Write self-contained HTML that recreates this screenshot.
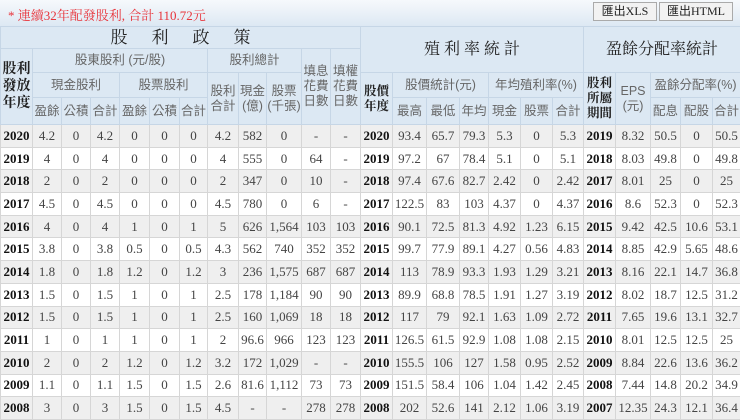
<!DOCTYPE html>
<html><head><meta charset="utf-8"><style>
html,body{margin:0;padding:0;width:740px;height:416px;overflow:hidden;background:#fff}
.top{position:absolute;left:0;top:0;width:740px;height:26px;background:linear-gradient(#f6f9fc,#dde8f3)}
.msg{position:absolute;left:8px;top:5px;font:13px "Liberation Serif","Noto Serif CJK SC","Noto Sans CJK TC",serif;color:#e8333a}
.btn{position:absolute;top:2px;height:17px;border:1px solid #aaa;background:#f2f2f2;font:12px "Liberation Serif","Noto Sans CJK TC",serif;color:#222;line-height:17px;text-align:center}
table{position:absolute;left:0;top:26px;border-collapse:collapse;table-layout:fixed;width:740px}
td{padding:0;text-align:center;border:1px solid #d6d6d6;font:13px "Liberation Serif",serif;color:#444;white-space:nowrap;overflow:hidden}
thead td{background:#dce8f3;border-color:#c6d6e6;font:12.5px "Liberation Sans","Noto Sans CJK TC",sans-serif;color:#666;line-height:15px}
thead td.b{color:#222;font-weight:bold;font-family:"Liberation Serif","Noto Serif CJK SC",serif}
thead td.t{font-size:17px;color:#222;font-family:"Liberation Serif","Noto Serif CJK SC",serif}
tbody tr{height:22.7px}
tbody tr:nth-child(odd) td{background:#efefef}
td.y{font-weight:bold;color:#111}
</style></head><body>
<div class="top"><div class="msg">* 連續32年配發股利, 合計 110.72元</div>
<div class="btn" style="left:593px;width:62px">匯出XLS</div>
<div class="btn" style="left:659px;width:72px">匯出HTML</div></div>
<table>
<colgroup>
<col style="width:32px"><col style="width:29px"><col style="width:29px"><col style="width:29px"><col style="width:30px"><col style="width:30px"><col style="width:28px"><col style="width:31px"><col style="width:28px"><col style="width:35px"><col style="width:29px"><col style="width:30px">
<col style="width:32px"><col style="width:34px"><col style="width:33px"><col style="width:29px"><col style="width:32px"><col style="width:32px"><col style="width:31px"><col style="width:32px"><col style="width:35px"><col style="width:30px"><col style="width:32px"><col style="width:28px">
</colgroup>
<thead>
<tr style="height:22px"><td colspan="12" class="t" style="letter-spacing:24px;padding-left:24px">股利政策</td><td colspan="7" rowspan="2" class="t" style="font-size:16px">殖 利 率 統 計</td><td colspan="5" rowspan="2" class="t" style="font-size:16px">盈餘分配率統計</td></tr>
<tr style="height:24px"><td rowspan="3" class="b" style="font-size:14px;line-height:17px">股利<br>發放<br>年度</td><td colspan="6">股東股利 (元/股)</td><td colspan="3">股利總計</td><td rowspan="3">填息<br>花費<br>日數</td><td rowspan="3">填權<br>花費<br>日數</td></tr>
<tr style="height:25px"><td colspan="3">現金股利</td><td colspan="3">股票股利</td><td rowspan="2">股利<br>合計</td><td rowspan="2">現金<br>(億)</td><td rowspan="2">股票<br>(千張)</td><td rowspan="2" class="b">股價<br>年度</td><td colspan="3">股價統計(元)</td><td colspan="3">年均殖利率(%)</td><td rowspan="2" class="b">股利<br>所屬<br>期間</td><td rowspan="2">EPS<br>(元)</td><td colspan="3">盈餘分配率(%)</td></tr>
<tr style="height:27px"><td>盈餘</td><td>公積</td><td>合計</td><td>盈餘</td><td>公積</td><td>合計</td><td>最高</td><td>最低</td><td>年均</td><td>現金</td><td>股票</td><td>合計</td><td>配息</td><td>配股</td><td>合計</td></tr>
</thead>
<tbody>
<tr><td class="y">2020</td><td>4.2</td><td>0</td><td>4.2</td><td>0</td><td>0</td><td>0</td><td>4.2</td><td>582</td><td>0</td><td>-</td><td>-</td><td class="y">2020</td><td>93.4</td><td>65.7</td><td>79.3</td><td>5.3</td><td>0</td><td>5.3</td><td class="y">2019</td><td>8.32</td><td>50.5</td><td>0</td><td>50.5</td></tr>
<tr><td class="y">2019</td><td>4</td><td>0</td><td>4</td><td>0</td><td>0</td><td>0</td><td>4</td><td>555</td><td>0</td><td>64</td><td>-</td><td class="y">2019</td><td>97.2</td><td>67</td><td>78.4</td><td>5.1</td><td>0</td><td>5.1</td><td class="y">2018</td><td>8.03</td><td>49.8</td><td>0</td><td>49.8</td></tr>
<tr><td class="y">2018</td><td>2</td><td>0</td><td>2</td><td>0</td><td>0</td><td>0</td><td>2</td><td>347</td><td>0</td><td>10</td><td>-</td><td class="y">2018</td><td>97.4</td><td>67.6</td><td>82.7</td><td>2.42</td><td>0</td><td>2.42</td><td class="y">2017</td><td>8.01</td><td>25</td><td>0</td><td>25</td></tr>
<tr><td class="y">2017</td><td>4.5</td><td>0</td><td>4.5</td><td>0</td><td>0</td><td>0</td><td>4.5</td><td>780</td><td>0</td><td>6</td><td>-</td><td class="y">2017</td><td>122.5</td><td>83</td><td>103</td><td>4.37</td><td>0</td><td>4.37</td><td class="y">2016</td><td>8.6</td><td>52.3</td><td>0</td><td>52.3</td></tr>
<tr><td class="y">2016</td><td>4</td><td>0</td><td>4</td><td>1</td><td>0</td><td>1</td><td>5</td><td>626</td><td>1,564</td><td>103</td><td>103</td><td class="y">2016</td><td>90.1</td><td>72.5</td><td>81.3</td><td>4.92</td><td>1.23</td><td>6.15</td><td class="y">2015</td><td>9.42</td><td>42.5</td><td>10.6</td><td>53.1</td></tr>
<tr><td class="y">2015</td><td>3.8</td><td>0</td><td>3.8</td><td>0.5</td><td>0</td><td>0.5</td><td>4.3</td><td>562</td><td>740</td><td>352</td><td>352</td><td class="y">2015</td><td>99.7</td><td>77.9</td><td>89.1</td><td>4.27</td><td>0.56</td><td>4.83</td><td class="y">2014</td><td>8.85</td><td>42.9</td><td>5.65</td><td>48.6</td></tr>
<tr><td class="y">2014</td><td>1.8</td><td>0</td><td>1.8</td><td>1.2</td><td>0</td><td>1.2</td><td>3</td><td>236</td><td>1,575</td><td>687</td><td>687</td><td class="y">2014</td><td>113</td><td>78.9</td><td>93.3</td><td>1.93</td><td>1.29</td><td>3.21</td><td class="y">2013</td><td>8.16</td><td>22.1</td><td>14.7</td><td>36.8</td></tr>
<tr><td class="y">2013</td><td>1.5</td><td>0</td><td>1.5</td><td>1</td><td>0</td><td>1</td><td>2.5</td><td>178</td><td>1,184</td><td>90</td><td>90</td><td class="y">2013</td><td>89.9</td><td>68.8</td><td>78.5</td><td>1.91</td><td>1.27</td><td>3.19</td><td class="y">2012</td><td>8.02</td><td>18.7</td><td>12.5</td><td>31.2</td></tr>
<tr><td class="y">2012</td><td>1.5</td><td>0</td><td>1.5</td><td>1</td><td>0</td><td>1</td><td>2.5</td><td>160</td><td>1,069</td><td>18</td><td>18</td><td class="y">2012</td><td>117</td><td>79</td><td>92.1</td><td>1.63</td><td>1.09</td><td>2.72</td><td class="y">2011</td><td>7.65</td><td>19.6</td><td>13.1</td><td>32.7</td></tr>
<tr><td class="y">2011</td><td>1</td><td>0</td><td>1</td><td>1</td><td>0</td><td>1</td><td>2</td><td>96.6</td><td>966</td><td>123</td><td>123</td><td class="y">2011</td><td>126.5</td><td>61.5</td><td>92.9</td><td>1.08</td><td>1.08</td><td>2.15</td><td class="y">2010</td><td>8.01</td><td>12.5</td><td>12.5</td><td>25</td></tr>
<tr><td class="y">2010</td><td>2</td><td>0</td><td>2</td><td>1.2</td><td>0</td><td>1.2</td><td>3.2</td><td>172</td><td>1,029</td><td>-</td><td>-</td><td class="y">2010</td><td>155.5</td><td>106</td><td>127</td><td>1.58</td><td>0.95</td><td>2.52</td><td class="y">2009</td><td>8.84</td><td>22.6</td><td>13.6</td><td>36.2</td></tr>
<tr><td class="y">2009</td><td>1.1</td><td>0</td><td>1.1</td><td>1.5</td><td>0</td><td>1.5</td><td>2.6</td><td>81.6</td><td>1,112</td><td>73</td><td>73</td><td class="y">2009</td><td>151.5</td><td>58.4</td><td>106</td><td>1.04</td><td>1.42</td><td>2.45</td><td class="y">2008</td><td>7.44</td><td>14.8</td><td>20.2</td><td>34.9</td></tr>
<tr><td class="y">2008</td><td>3</td><td>0</td><td>3</td><td>1.5</td><td>0</td><td>1.5</td><td>4.5</td><td>-</td><td>-</td><td>278</td><td>278</td><td class="y">2008</td><td>202</td><td>52.6</td><td>141</td><td>2.12</td><td>1.06</td><td>3.19</td><td class="y">2007</td><td>12.35</td><td>24.3</td><td>12.1</td><td>36.4</td></tr>
</tbody></table>
</body></html>
